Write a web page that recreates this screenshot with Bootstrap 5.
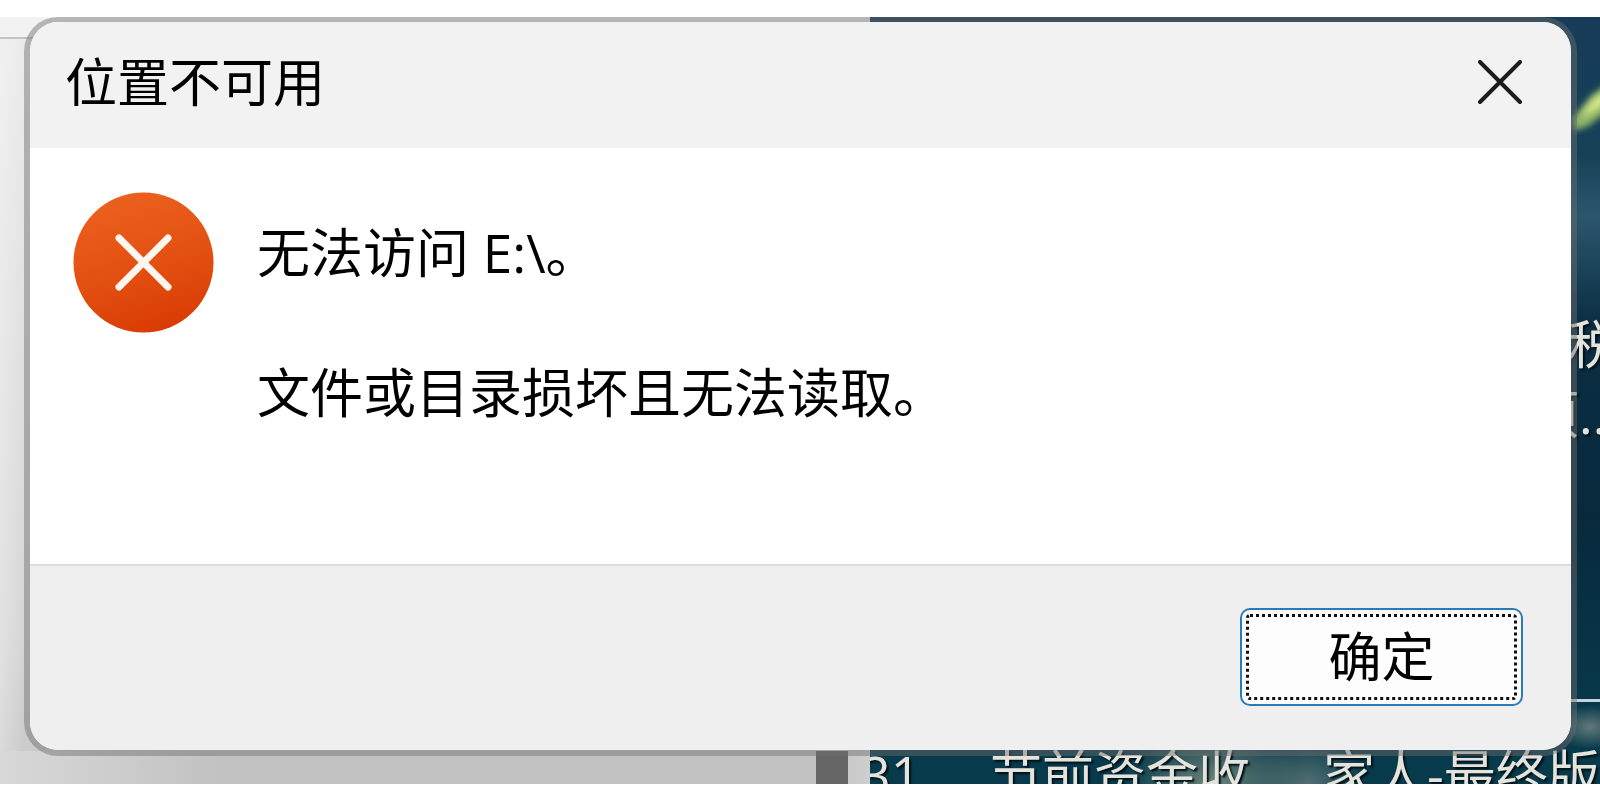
<!DOCTYPE html>
<html lang="zh-CN">
<head>
<meta charset="utf-8">
<meta name="viewport" content="width=device-width, initial-scale=1">
<title>位置不可用</title>
<link href="https://cdn.jsdelivr.net/npm/bootstrap@5.3.0/dist/css/bootstrap.min.css" rel="stylesheet">
<style>
  body { font-family: "Open Sans", "Noto Sans CJK SC", sans-serif; background: #fff; color: #000; }
  .screen { padding: 17px 0 16px; }
  .desktop { grid-template: minmax(0, 1fr) / minmax(0, 1fr); }
  .backdrop, .dialog-box { grid-area: 1 / 1; }
  .explorer { width: 54.375%; background: linear-gradient(90deg, rgba(255,255,255,.3), rgba(255,255,255,0) 24px), linear-gradient(#ececec, #e2e2e2 35%, #d6d6d6 80%, #c8c8c8); }
  .explorer-bar { height: 22px; background: #f2f2f2; border-bottom: 2px solid #c4c4c4; }
  .scroll-strip { height: 33px; padding-right: 22px; background: linear-gradient(90deg, #d8d8d8, #c2c2c2 25%, #c2c2c2 94%, #cecece); }
  .scroll-thumb { width: 32px; background: #666; }
  .wallpaper {
    background:
      radial-gradient(ellipse 36px 22px at calc(100% - 10px) 710px, #617a7b, transparent),
      radial-gradient(ellipse 90px 60px at 47% 100%, #70857b, transparent),
      radial-gradient(ellipse 60px 50px at 60% 100%, #526f72, transparent),
      linear-gradient(#173b59, #164157 18%, #2b566e 26%, #0b2e43 40%, #08293c 65%, #07384a 90%, #073b4b);
  }
  .desk-label { position: absolute; font-size: 52px; line-height: 60px; color: #e4e4dc; white-space: nowrap; text-shadow: 2px 2px 2px #001018; }
  .comet { position: absolute; right: -12px; top: 62px; width: 44px; height: 56px; }
  .desk-rule { position: absolute; right: 0; top: 682px; width: 29px; height: 3px; background: #c4d4da; }
  .dialog-box { margin: 0 23px 28px 24px; border: 6px solid rgba(110,110,110,.46); border-top-width: 5px; border-radius: 34px; background: #fff; background-clip: padding-box; }
  .dialog-head { height: 126px; padding: 0 41px 7px 35px; background: #f2f2f2; }
  .dialog-head h1 { font-size: 52px; line-height: 70px; }
  .close-btn { width: 60px; height: 60px; }
  .dialog-main { padding: 44px 43px; gap: 43px; font-size: 53px; line-height: 70px; }
  .message { padding-top: 26px; }
  .message p { margin-bottom: 70px; }
  .dialog-foot { padding: 42px 48px 44px; background: #efefef; border-top: 2px solid #dcdcdc; }
  .ok-btn { width: 283px; height: 98px; font-size: 53px; line-height: 60px; color: #000; background: #fdfdfd; border: 2px solid #2b7bb5; border-radius: 10px; outline: 3px dotted #111; outline-offset: -9px; }
</style>
</head>
<body>
<div class="screen min-vh-100 d-flex flex-column">
  <div class="desktop d-grid flex-grow-1 overflow-hidden">
    <div class="backdrop d-flex overflow-hidden" aria-hidden="true">
      <div class="explorer d-flex flex-column justify-content-between">
        <div class="explorer-bar"></div>
        <div class="scroll-strip d-flex justify-content-end"><div class="scroll-thumb"></div></div>
      </div>
      <div class="wallpaper position-relative flex-grow-1 overflow-hidden">
        <svg class="comet" viewBox="0 0 44 56">
          <defs><filter id="soft"><feGaussianBlur stdDeviation="3"/></filter></defs>
          <path d="M44 2L24 16 4 40l2 12 14-5 24-18z" fill="#8fb568" filter="url(#soft)"/>
          <path d="M44 8L26 20 12 38l14-6 18-12z" fill="#d7e88c" filter="url(#soft)"/>
        </svg>
        <div class="desk-label" style="right:-20px;top:297px">税</div>
        <div class="desk-label" style="right:-20px;top:367px">项...</div>
        <div class="desk-rule"></div>
        <div class="desk-label" style="left:-9px;bottom:-20px">31</div>
        <div class="desk-label" style="left:120px;bottom:-20px">节前资金收</div>
        <div class="desk-label" style="left:453px;bottom:-20px">家人-最终版</div>
      </div>
    </div>

    <section class="dialog-box position-relative z-1 d-flex flex-column overflow-hidden" role="alertdialog" aria-labelledby="dialog-title" aria-describedby="dialog-text">
      <header class="dialog-head d-flex align-items-center justify-content-between">
        <h1 id="dialog-title" class="m-0 fw-normal">位置不可用</h1>
        <button type="button" class="close-btn btn p-0 border-0 d-flex align-items-center justify-content-center" aria-label="关闭">
          <svg width="44" height="44" viewBox="0 0 44 44" fill="none" stroke="#1c1c1c" stroke-width="4" stroke-linecap="round"><path d="M2 2l40 40M42 2L2 42"/></svg>
        </button>
      </header>
      <div class="dialog-main d-flex align-items-start flex-grow-1">
        <svg class="flex-shrink-0" width="141" height="141" viewBox="0 0 141 141" aria-hidden="true">
          <defs><linearGradient id="disc" x1=".3" y1="0" x2=".6" y2="1"><stop offset="0" stop-color="#ec6120"/><stop offset=".55" stop-color="#e35011"/><stop offset="1" stop-color="#d93b03"/></linearGradient></defs>
          <circle cx="70.5" cy="70.5" r="70" fill="url(#disc)"/>
          <path d="M46 46l49 49M95 46L46 95" stroke="#fff6f0" stroke-width="7" stroke-linecap="round"/>
        </svg>
        <div id="dialog-text" class="message">
          <p>无法访问 E:\。</p>
          <p class="mb-0">文件或目录损坏且无法读取。</p>
        </div>
      </div>
      <footer class="dialog-foot d-flex justify-content-end">
        <button type="button" class="ok-btn btn p-0">确定</button>
      </footer>
    </section>
  </div>
</div>
<script src="https://cdn.jsdelivr.net/npm/bootstrap@5.3.0/dist/js/bootstrap.bundle.min.js"></script>
</body>
</html>
